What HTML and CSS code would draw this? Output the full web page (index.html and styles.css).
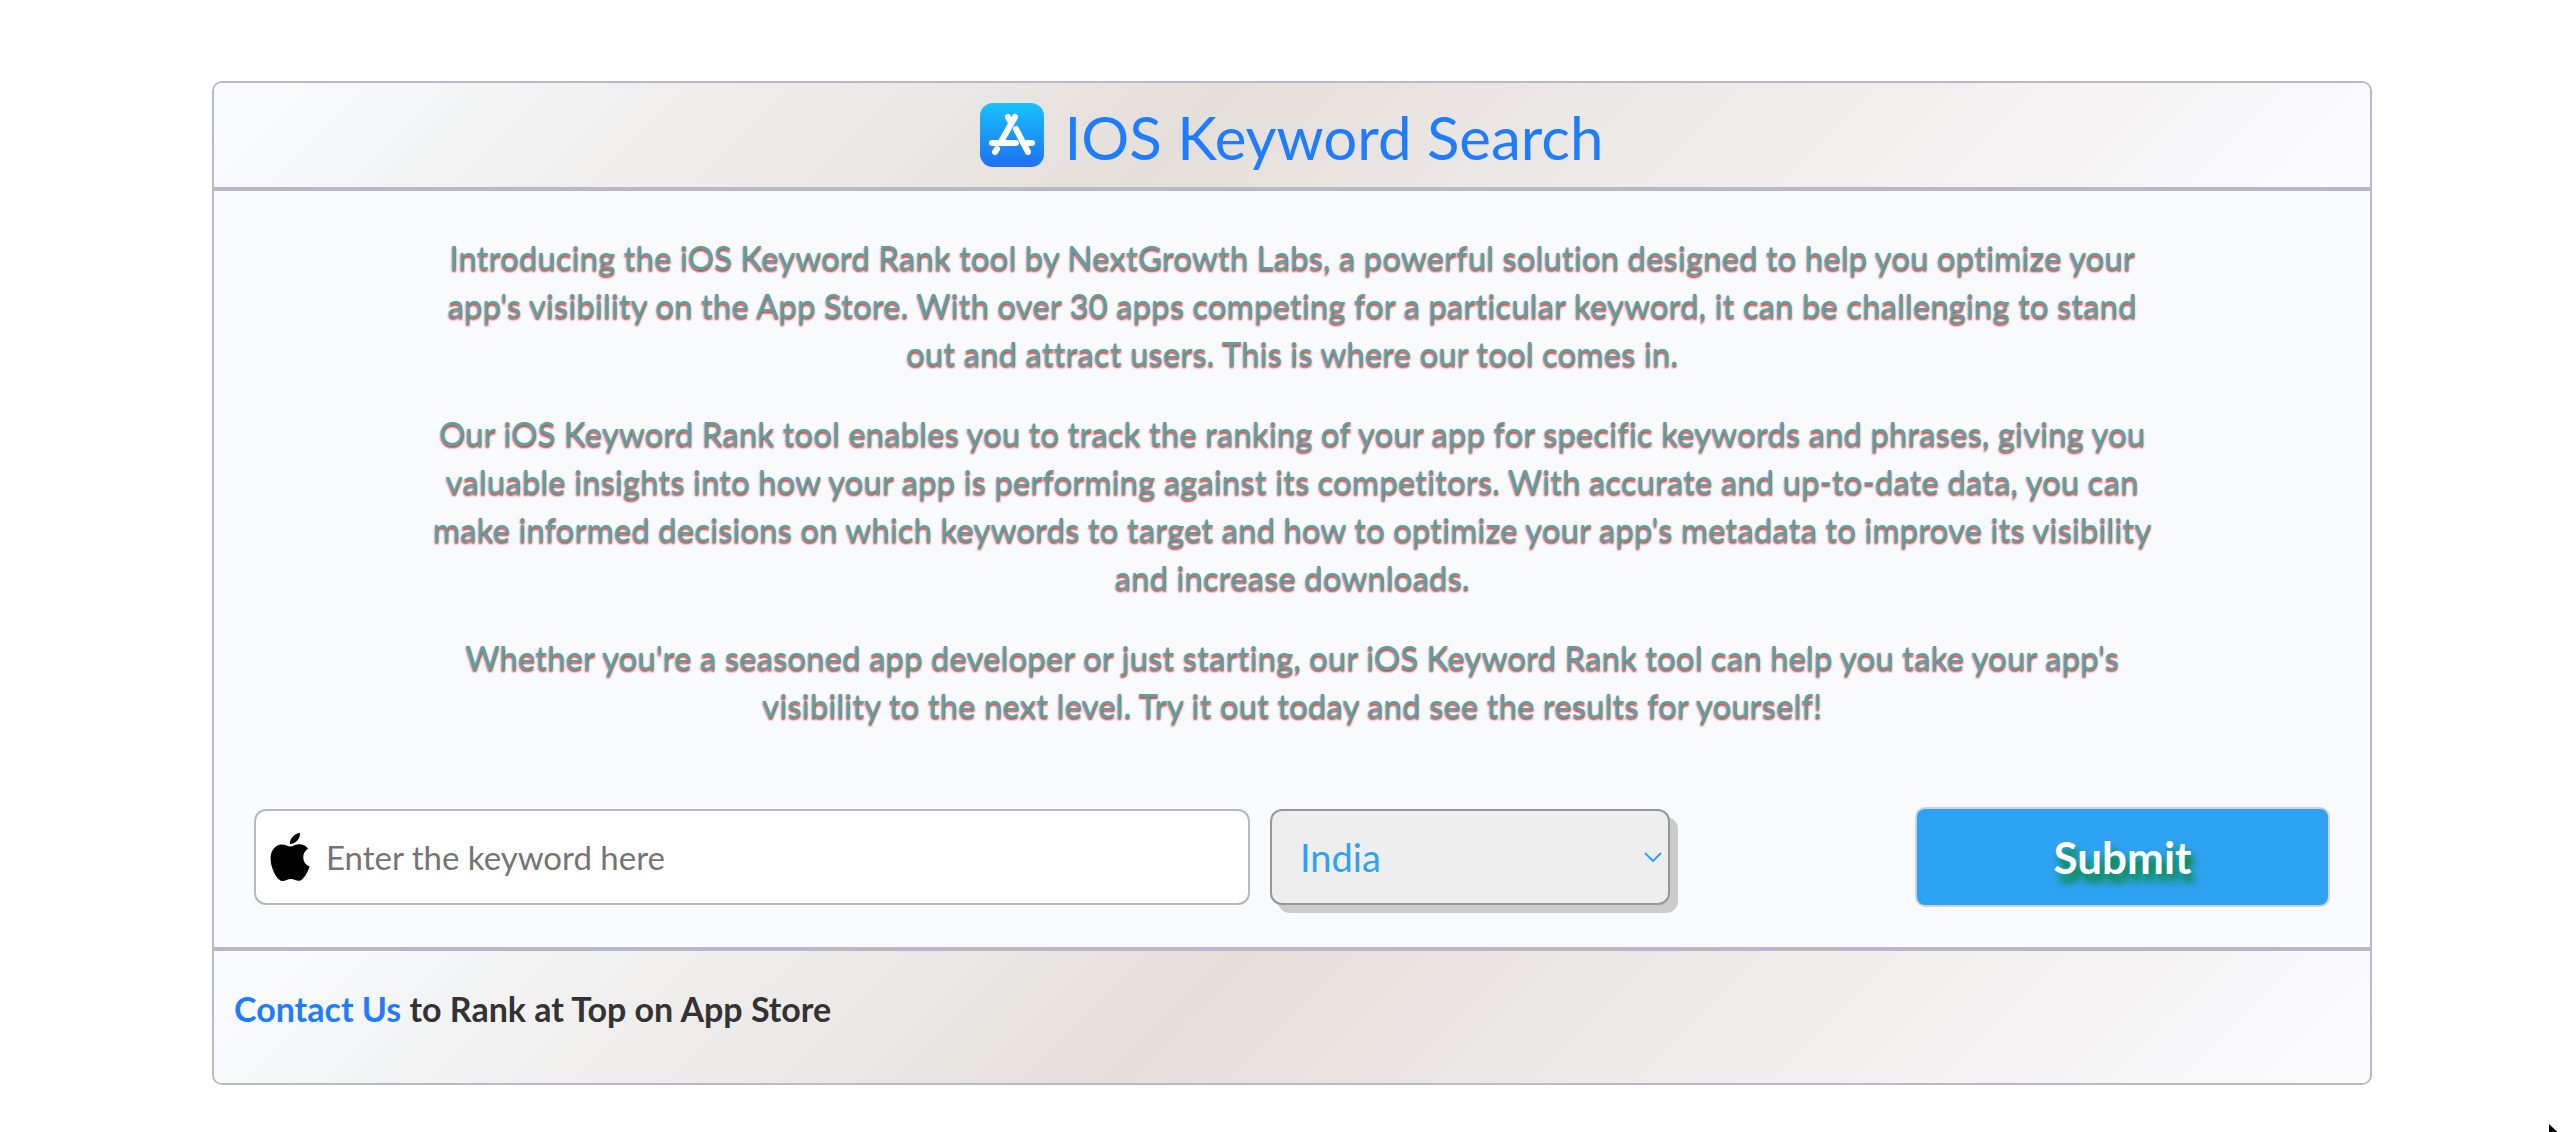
FILE: index.html
```html
<!DOCTYPE html>
<html lang="en">
<head>
<meta charset="utf-8">
<meta name="viewport" content="width=device-width, initial-scale=1">
<title>IOS Keyword Search</title>
<link rel="stylesheet" href="styles.css">
</head>
<body>
<main class="card">
  <header class="card-header">
    <svg class="store-icon" viewBox="0 0 64 64" aria-hidden="true">
      <defs>
        <linearGradient id="store-blue" x1="0" y1="0" x2="0" y2="1">
          <stop offset="0" stop-color="#19c2fb"/>
          <stop offset="1" stop-color="#1f70f2"/>
        </linearGradient>
      </defs>
      <rect width="64" height="64" rx="13" fill="url(#store-blue)"/>
      <g stroke="#fff" stroke-width="6" stroke-linecap="round" fill="none">
        <path d="M35 14L22 37"/>
        <path d="M28 14L31 20"/>
        <path d="M36 26L48 49"/>
        <path d="M12 40H36"/>
        <path d="M44 40H52"/>
        <path d="M17 46L15 49"/>
      </g>
    </svg>
    <h1 class="title">IOS Keyword Search</h1>
  </header>

  <section class="card-body">
    <div class="intro">
      <p>Introducing the iOS Keyword Rank tool by NextGrowth Labs, a powerful solution designed to help you optimize your app's visibility on the App Store. With over 30 apps competing for a particular keyword, it can be challenging to stand out and attract users. This is where our tool comes in.</p>
      <p>Our iOS Keyword Rank tool enables you to track the ranking of your app for specific keywords and phrases, giving you valuable insights into how your app is performing against its competitors. With accurate and up-to-date data, you can make informed decisions on which keywords to target and how to optimize your app's metadata to improve its visibility and increase downloads.</p>
      <p>Whether you're a seasoned app developer or just starting, our iOS Keyword Rank tool can help you take your app's visibility to the next level. Try it out today and see the results for yourself!</p>
    </div>

    <form class="search">
      <label class="keyword">
        <svg class="apple" viewBox="0 0 40 48" aria-hidden="true">
          <path d="M30 0C30.500 6 25 11 20 11C19.500 5 25 .5 30 0Z"/>
          <path d="M20.500 13.500C23 13.500 25.500 11 30 11.300C33.500 11.500 36.500 13 38 15.800C31 20 32 30.500 39.500 33.500C38 39 33.500 47 29.500 47.800C26.500 48.300 24.500 46 21 46C17.500 46 15.500 48 12.500 48C6 48-4 27 3 16.500C5 13.300 8.500 11.400 12 11.400C15.500 11.400 18 13.500 20.500 13.500Z"/>
        </svg>
        <input class="keyword-input" type="text" placeholder="Enter the keyword here" aria-label="Keyword">
      </label>
      <select class="country" aria-label="Country">
        <option>India</option>
      </select>
      <button class="submit" type="submit">Submit</button>
    </form>
  </section>

  <footer class="card-footer">
    <a class="contact" href="#">Contact Us</a> to Rank at Top on App Store
  </footer>
</main>
<svg class="pointer" viewBox="0 0 20 30" aria-hidden="true">
  <path d="M2 3V26L8 21L12 29L16 27L12 19H19Z"/>
</svg>
</body>
</html>
```

FILE: styles.css
```css
* {
  box-sizing: border-box;
}

body {
  margin: 0;
  padding-left: 20px;
  overflow: hidden;
  background: #fff;
  color: #333;
  font-family: Lato, sans-serif;
  font-size: 33px;
  font-variant-ligatures: none;
  line-height: 48px;
}

.card {
  max-width: 2160px;
  margin: 81px auto 0;
  overflow: hidden;
  border: 2px solid #b9b8cb;
  border-radius: 10px;
  background: #f8fafc;
}

.card-header,
.card-footer {
  background: linear-gradient(135deg, #f9fcff 0%, #e5dfda 45%, #fbfbfe 100%);
}

.card-header {
  display: flex;
  justify-content: center;
  gap: 20px;
  padding: 20px 20px 16px;
  border-bottom: 4px solid #b9b8cb;
}

.store-icon {
  width: 64px;
  height: 64px;
}

.title {
  margin: 0;
  color: #1f7cff;
  font-size: 60px;
  font-weight: 400;
  line-height: 68px;
}

.card-body {
  padding: 42px 40px 40px;
}

.intro {
  max-width: 1728px;
  margin: 0 auto;
  color: #5f9ea0;
  font-weight: 500;
  text-align: center;
  text-shadow: 0 2px 2px #cd3c3c;
}

.intro p {
  margin: 0 0 32px;
}

.search {
  display: grid;
  grid-template-columns: 996fr 400fr 640fr;
  gap: 20px;
  align-items: center;
  margin-top: 78px;
}

.keyword {
  display: flex;
  align-items: center;
  height: 96px;
  padding: 0 14px;
  border: 2px solid #b8b9bb;
  border-radius: 12px;
  background: #fff;
}

.apple {
  flex: none;
  width: 40px;
  height: 48px;
}

.keyword-input {
  flex: 1;
  min-width: 0;
  padding: 0 0 0 16px;
  border: 0;
  outline: 0;
  background: transparent;
  font: inherit;
}

.keyword-input::placeholder {
  color: #757575;
  opacity: 1;
}

.country {
  height: 96px;
  padding: 0 28px;
  appearance: none;
  border: 2px solid #969898;
  border-radius: 12px;
  background: #eee url("data:image/svg+xml,%3Csvg xmlns='http://www.w3.org/2000/svg' viewBox='0 0 18 10' fill='none' stroke='%232ea2f2' stroke-width='2'%3E%3Cpath d='M1 1L9 9L17 1'/%3E%3C/svg%3E") right 6px center / 18px 10px no-repeat;
  box-shadow: 8px 8px 0 #ccc;
  color: #2ea2f2;
  font: inherit;
  font-size: 38px;
}

.submit {
  height: 100px;
  margin-left: 225px;
  border: 2px solid #d0d2d4;
  border-radius: 10px;
  background: #2ea2f2;
  color: #fff;
  font: inherit;
  font-size: 44px;
  font-weight: 700;
  text-shadow: 4px 8px 8px #008000;
}

.card-footer {
  padding: 34px 20px 50px;
  border-top: 4px solid #b9b8cb;
  font-size: 34px;
  font-weight: 700;
}

.contact {
  color: #1f7cff;
  text-decoration: none;
}

.pointer {
  position: absolute;
  right: -3px;
  bottom: -19px;
  width: 20px;
  height: 30px;
}
```
